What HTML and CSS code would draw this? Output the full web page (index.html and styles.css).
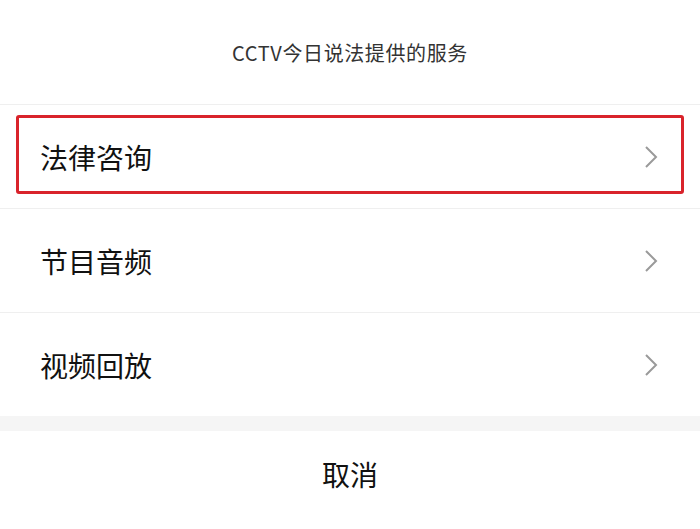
FILE: index.html
```html
<!DOCTYPE html>
<html lang="zh-CN">
<head>
<meta charset="utf-8">
<link rel="stylesheet" href="styles.css">
</head>
<body>
<div class="sheet">
  <div class="title">CCTV今日说法提供的服务</div>
  <div class="list">
    <div class="row highlighted">
      <span class="label">法律咨询</span>
      <svg class="chev" width="14" height="24" viewBox="0 0 14 24"><polyline points="2,2 12,12 2,22" fill="none" stroke="#9a9a9a" stroke-width="2"/></svg>
      <div class="mark"></div>
    </div>
    <div class="row">
      <span class="label">节目音频</span>
      <svg class="chev" width="14" height="24" viewBox="0 0 14 24"><polyline points="2,2 12,12 2,22" fill="none" stroke="#9a9a9a" stroke-width="2"/></svg>
    </div>
    <div class="row">
      <span class="label">视频回放</span>
      <svg class="chev" width="14" height="24" viewBox="0 0 14 24"><polyline points="2,2 12,12 2,22" fill="none" stroke="#9a9a9a" stroke-width="2"/></svg>
    </div>
  </div>
  <div class="gap"></div>
  <div class="cancel">取消</div>
</div>
</body>
</html>
```
FILE: styles.css
```css
html, body {
  margin: 0;
  padding: 0;
  background: #ffffff;
}
body {
  font-family: "Noto Sans CJK SC", "Noto Sans", sans-serif;
  width: 700px;
  height: 529px;
  overflow: hidden;
}
.sheet {
  display: flex;
  flex-direction: column;
  height: 529px;
}
.title {
  height: 104px;
  display: flex;
  align-items: center;
  justify-content: center;
  font-size: 20px;
  letter-spacing: 0.6px;
  color: #333333;
}
.list {
  display: flex;
  flex-direction: column;
}
.row {
  position: relative;
  height: 103px;
  border-top: 1px solid #efefef;
  display: flex;
  align-items: center;
  justify-content: space-between;
  padding: 0 42px 0 40px;
}
.label {
  font-size: 28px;
  color: #111111;
  line-height: 1;
}
.chev {
  display: block;
}
.mark {
  position: absolute;
  left: 16px;
  right: 16px;
  top: 10px;
  bottom: 14px;
  border: 3px solid #d9232b;
  border-radius: 3px;
}
.gap {
  height: 15px;
  background: #f5f5f5;
}
.cancel {
  flex: 1;
  display: flex;
  align-items: center;
  justify-content: center;
  font-size: 28px;
  color: #111111;
  padding-bottom: 12px;
}
```
